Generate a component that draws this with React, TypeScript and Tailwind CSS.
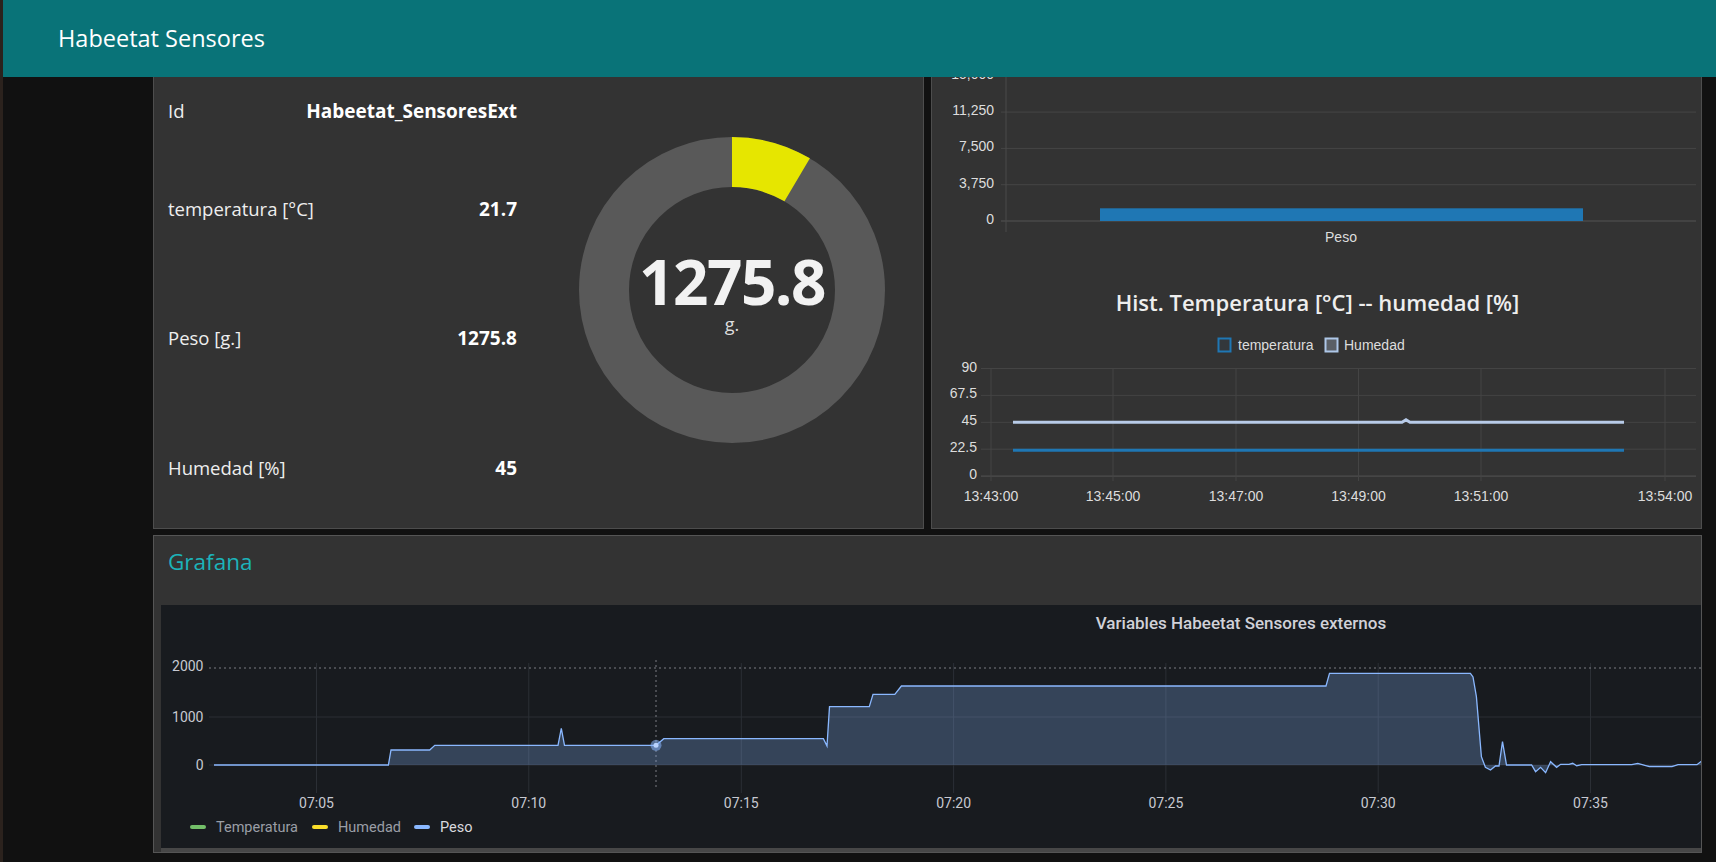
import React from "react";

const sans = { fontFamily: '"Open Sans", "Noto Sans", sans-serif' };
const chartFont = '"Liberation Sans", Arial, sans-serif';
const grafFont = 'Roboto, "Liberation Sans", sans-serif';

function LeftPanel() {
  const rows: { label: string; value: string; mt: string }[] = [
    { label: "Id", value: "Habeetat_SensoresExt", mt: "mt-0" },
    { label: "temperatura [°C]", value: "21.7", mt: "mt-[68px]" },
    { label: "Peso [g.]", value: "1275.8", mt: "mt-[99px]" },
    { label: "Humedad [%]", value: "45", mt: "mt-[100px]" },
  ];
  const cx = 160;
  const cy = 160;
  const R = 153;
  const r = 103;
  const ang = (1275.8 / 15000) * 2 * Math.PI;
  const ox = cx + R * Math.sin(ang);
  const oy = cy - R * Math.cos(ang);
  const ix = cx + r * Math.sin(ang);
  const iy = cy - r * Math.cos(ang);
  return (
    <div className="w-[771px] shrink-0 bg-[#333333] border-x border-b border-[#4d4d4d] flex pl-[14px]">
      <div className="w-[349px] shrink-0 flex flex-col pt-[19px]">
        {rows.map((row) => (
          <div key={row.label} className={`h-[30px] flex items-center justify-between ${row.mt}`}>
            <span className="text-[18.5px] text-[#eeeeee]">{row.label}</span>
            <span className="text-[19px] font-bold text-white">{row.value}</span>
          </div>
        ))}
      </div>
      <div className="ml-[55px] mt-[53px]">
        <svg width="320" height="320" viewBox="0 0 320 320">
          <circle cx={cx} cy={cy} r={(R + r) / 2} fill="none" stroke="#595959" strokeWidth={R - r} />
          <path
            d={`M${cx} ${cy - R} A${R} ${R} 0 0 1 ${ox} ${oy} L${ix} ${iy} A${r} ${r} 0 0 0 ${cx} ${cy - r} Z`}
            fill="#e6e600"
          />
          <text
            x={cx}
            y={174.5}
            textAnchor="middle"
            fill="#f2f2f2"
            fontSize="62"
            fontWeight="700"
            letterSpacing="-1.5"
            style={sans}
          >
            1275.8
          </text>
          <text x={cx} y={200.5} textAnchor="middle" fill="#dddddd" fontSize="18" style={sans}>
            g.
          </text>
        </svg>
      </div>
    </div>
  );
}

function BarChart() {
  const grid = [75.8, 112.1, 148.4, 184.7, 221];
  const labels = ["15,000", "11,250", "7,500", "3,750", "0"];
  return (
    <svg width="769" height="183" viewBox="932 77 769 183" className="block">
      {grid.map((y, i) => (
        <line key={y} x1={1001} x2={1696} y1={y} y2={y} stroke={i === 4 ? "#555555" : "#464646"} strokeWidth="1" />
      ))}
      <line x1={1006} x2={1006} y1={60} y2={232} stroke="#4a4a4a" strokeWidth="1" />
      {grid.map((y, i) => (
        <text key={labels[i]} x={994} y={y + 3} textAnchor="end" fill="#dddddd" fontSize="14" fontFamily={chartFont}>
          {labels[i]}
        </text>
      ))}
      <rect x={1100} y={208.3} width={483} height={12.7} fill="#1f77b4" />
      <text x={1341} y={242} textAnchor="middle" fill="#dddddd" fontSize="14" fontFamily={chartFont}>
        Peso
      </text>
    </svg>
  );
}

function LineChart() {
  const gy = [368.5, 395.4, 422.3, 449.2, 476.1];
  const yl = ["90", "67.5", "45", "22.5", "0"];
  const gx = [991, 1113, 1236, 1358.5, 1481, 1665];
  const xl = ["13:43:00", "13:45:00", "13:47:00", "13:49:00", "13:51:00", "13:54:00"];
  const hum = 476.1 - 45 * (107.6 / 90);
  const tem = 476.1 - 21.7 * (107.6 / 90);
  return (
    <svg width="769" height="198" viewBox="932 330 769 198" className="block">
      <rect x={1218.5} y={338.5} width={12} height={13} fill="#33373b" stroke="#1f77b4" strokeWidth="2" />
      <text x={1238} y={349.5} fill="#dddddd" fontSize="14" fontFamily={chartFont}>
        temperatura
      </text>
      <rect x={1325.5} y={338.5} width={12} height={13} fill="#5a5f66" stroke="#aec7e8" strokeWidth="2" />
      <text x={1344} y={349.5} fill="#dddddd" fontSize="14" fontFamily={chartFont}>
        Humedad
      </text>
      {gy.map((y, i) => (
        <line key={y} x1={981} x2={1696} y1={y} y2={y} stroke={i === 4 ? "#555555" : "#444444"} strokeWidth="1" />
      ))}
      {gx.map((x) => (
        <line key={x} x1={x} x2={x} y1={368} y2={481} stroke="#444444" strokeWidth="1" />
      ))}
      {gy.map((y, i) => (
        <text key={yl[i]} x={977} y={y + 3} textAnchor="end" fill="#dddddd" fontSize="14" fontFamily={chartFont}>
          {yl[i]}
        </text>
      ))}
      {gx.map((x, i) => (
        <text key={xl[i]} x={x} y={501} textAnchor="middle" fill="#dddddd" fontSize="14" fontFamily={chartFont}>
          {xl[i]}
        </text>
      ))}
      <path
        d={`M1013 ${hum} L1402 ${hum} L1406 ${hum - 2.5} L1410 ${hum} L1624 ${hum}`}
        fill="none"
        stroke="#b8cbe8"
        strokeWidth="3"
      />
      <path d={`M1013 ${tem} L1624 ${tem}`} fill="none" stroke="#1f77b4" strokeWidth="3" />
    </svg>
  );
}

function RightPanel() {
  return (
    <div className="w-[771px] shrink-0 bg-[#333333] border-x border-b border-[#4d4d4d] flex flex-col">
      <BarChart />
      <div
        className="mt-[27px] h-[30px] flex items-center justify-center text-[22px] font-semibold text-[#eeeeee] pl-[2px]"
        style={sans}
      >
        Hist. Temperatura [°C] -- humedad [%]
      </div>
      <div className="h-[13px]" />
      <LineChart />
    </div>
  );
}

const pesoPts: [number, number][] = [
  [214, 765], [388.4, 765], [391, 750], [429.7, 750], [434.8, 745.3], [558, 745.3], [561.3, 728.3],
  [564.5, 745.3], [656, 745.3], [663.8, 738.7], [823.4, 738.7], [827, 746], [829.5, 706.7],
  [869.3, 706.7], [873, 694.3], [894.8, 694.3], [901.4, 686], [1326, 686], [1329.5, 673.3],
  [1470.4, 673.3], [1473, 677], [1476.4, 696.7], [1481.4, 756.7], [1485.4, 767.3], [1490.5, 770],
  [1495.5, 766], [1499, 766], [1502.5, 741.7], [1506.5, 765], [1531.6, 765], [1535.6, 771.7],
  [1540.6, 767.3], [1545.6, 772.7], [1550.6, 761.7], [1556.6, 767.3], [1560.6, 764.3], [1569, 764.3],
  [1572.7, 763.3], [1576.7, 765.7], [1581.7, 764.7], [1631.8, 764.7], [1637.8, 763.3], [1649.3, 766.7],
  [1672, 766.7], [1678, 764.7], [1697, 764.7], [1702, 760.7],
];

function GrafanaChart() {
  const line = pesoPts.map((p, i) => `${i === 0 ? "M" : "L"}${p[0]} ${p[1]}`).join(" ");
  const area = `${line} L1702 765 L214 765 Z`;
  const vx = [316.5, 528.8, 741.3, 953.6, 1165.9, 1378.2, 1590.5];
  const vl = ["07:05", "07:10", "07:15", "07:20", "07:25", "07:30", "07:35"];
  return (
    <svg width="1541" height="243" viewBox="161 605 1541 243" className="block">
      <text x={1241} y={628.5} textAnchor="middle" fill="#d0d1d8" fontSize="17" fontWeight="500" fontFamily={grafFont}>
        Variables Habeetat Sensores externos
      </text>
      {vx.map((x) => (
        <line key={x} x1={x} x2={x} y1={663} y2={793} stroke="#2b2f35" strokeWidth="1" />
      ))}
      <line x1={209} x2={1702} y1={717} y2={717} stroke="#2b2f35" strokeWidth="1" />
      <line x1={209} x2={1702} y1={765} y2={765} stroke="#2b2f35" strokeWidth="1" />
      <line x1={209} x2={1702} y1={668} y2={668} stroke="#7a7d83" strokeWidth="1" strokeDasharray="2 3" />
      <line x1={656} x2={656} y1={660} y2={790} stroke="#7a7d83" strokeWidth="1" strokeDasharray="2 3" />
      <path d={area} fill="#8ab8ff" fillOpacity="0.26" />
      <path d={line} fill="none" stroke="#8ab8ff" strokeWidth="1.3" />
      <circle cx={656} cy={745.3} r={5.5} fill="#8ab8ff" fillOpacity="0.55" />
      <circle cx={656} cy={745.3} r={2.5} fill="#b9d3ff" />
      {[
        ["2000", 666],
        ["1000", 716.5],
        ["0", 765],
      ].map(([t, y]) => (
        <text key={t} x={203.5} y={(y as number) + 5} textAnchor="end" fill="#c7c9d1" fontSize="14" fontFamily={grafFont}>
          {t}
        </text>
      ))}
      {vx.map((x, i) => (
        <text key={vl[i]} x={x} y={808} textAnchor="middle" fill="#c7c9d1" fontSize="14" fontFamily={grafFont}>
          {vl[i]}
        </text>
      ))}
      <rect x={190} y={825} width={16} height={4} rx={2} fill="#73bf69" />
      <text x={216} y={831.5} fill="#9a9ea6" fontSize="14.5" fontFamily={grafFont}>
        Temperatura
      </text>
      <rect x={312} y={825} width={16} height={4} rx={2} fill="#fade2a" />
      <text x={338} y={831.5} fill="#9a9ea6" fontSize="14.5" fontFamily={grafFont}>
        Humedad
      </text>
      <rect x={414} y={825} width={16} height={4} rx={2} fill="#8ab8ff" />
      <text x={440} y={831.5} fill="#d8d9de" fontSize="14.5" fontFamily={grafFont}>
        Peso
      </text>
    </svg>
  );
}

function GrafanaPanel() {
  return (
    <div className="h-[318px] bg-[#333333] border border-[#555555] flex flex-col">
      <div className="h-[69px] shrink-0 pl-[14px] pt-[11px]">
        <span className="text-[22.5px] leading-[30px] font-medium text-[#1cb4ba]" style={sans}>
          Grafana
        </span>
      </div>
      <div className="ml-[7px] h-[243px] bg-[#181b1f] overflow-hidden">
        <GrafanaChart />
      </div>
      <div className="ml-[7px] h-[4px] bg-[#474747]" />
    </div>
  );
}

export default function App() {
  return (
    <div className="w-[1716px] h-[862px] overflow-hidden bg-[#111111] flex" style={sans}>
      <div className="w-[3px] shrink-0 bg-[#2b221d]" />
      <div className="flex-1 flex flex-col min-w-0">
        <header className="h-[77px] shrink-0 bg-[#097378] flex items-center pl-[55px]">
          <span className="text-white text-[23.5px]">Habeetat Sensores</span>
        </header>
        <div className="h-[452px] shrink-0 flex gap-[7px] pl-[150px] pr-[14px]">
          <LeftPanel />
          <RightPanel />
        </div>
        <div className="pl-[150px] pr-[14px] pt-[6px]">
          <GrafanaPanel />
        </div>
      </div>
    </div>
  );
}
